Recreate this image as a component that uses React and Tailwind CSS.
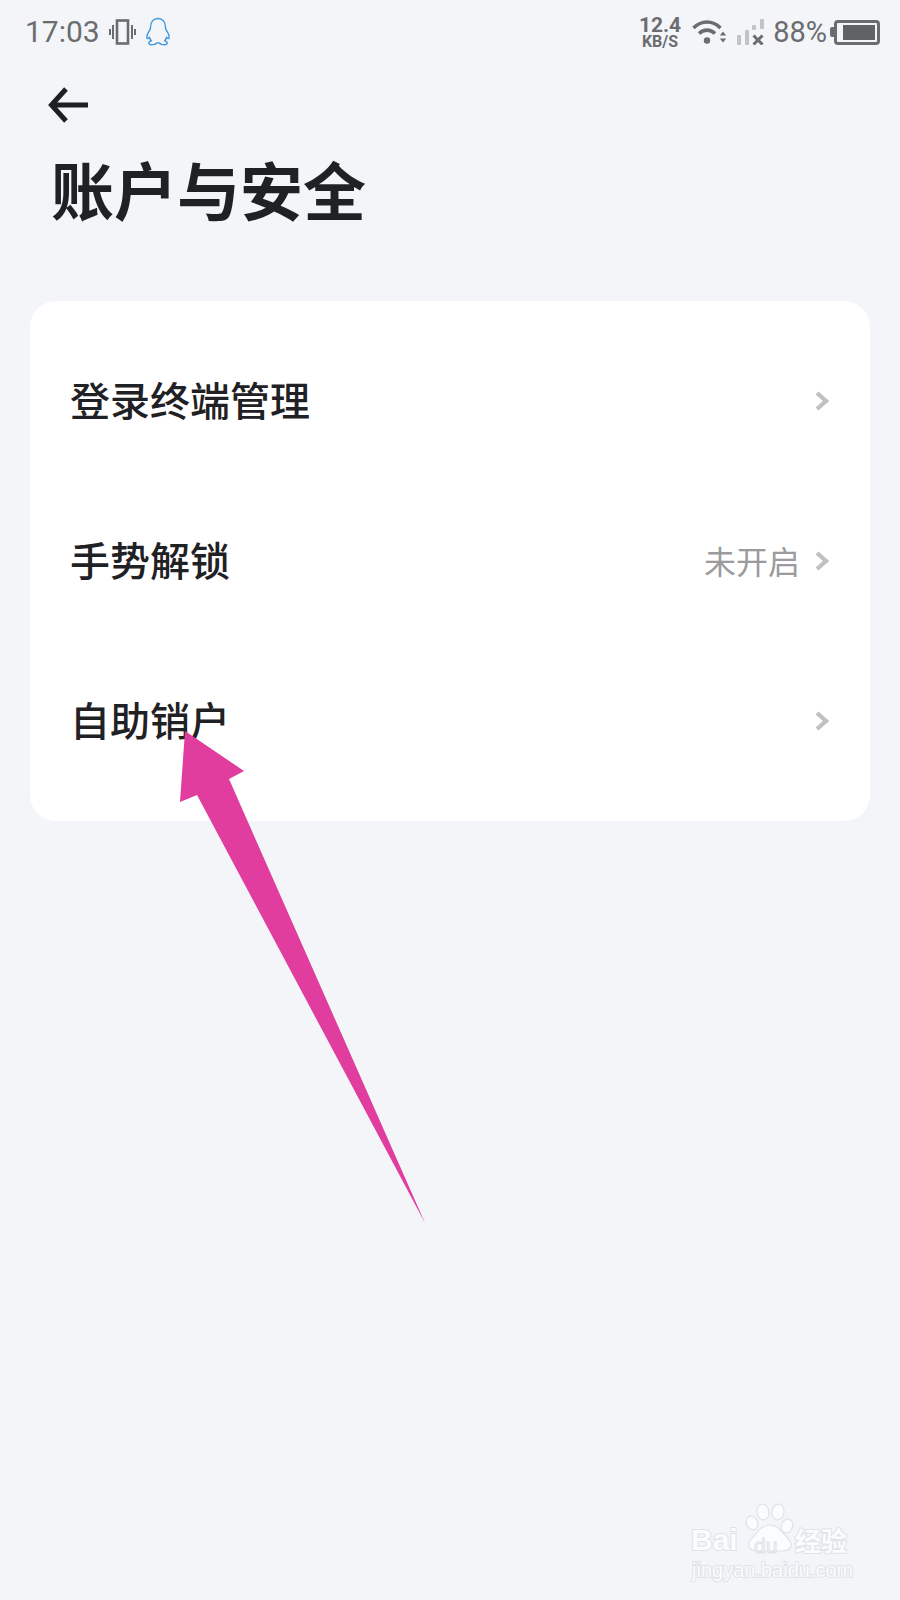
const cjk = "font-['Noto_Sans_CJK_SC','Noto_Sans',sans-serif]";

const rows = [
  { label: '登录终端管理' },
  { label: '手势解锁', value: '未开启' },
  { label: '自助销户' },
];

const VibrateIcon = () => (
  <svg width="27" height="26" viewBox="0 0 27 26" fill="none" stroke="#6a6c70">
    <rect x="8" y="1.5" width="11" height="23" strokeWidth="2.600" />
    <path d="M4 6v14M1 10v6M23 6v14M26 10v6" strokeWidth="2" />
  </svg>
);

const QQIcon = () => (
  <svg width="26" height="30" viewBox="0 0 26 30" fill="none" stroke="#3d97db" strokeWidth="1.400" strokeLinejoin="round">
    <path d="M13 1.500c-4.800 0-7.400 3.600-7.400 8.300 0 1.400-.2 2.400-1 3.600-1.700 2.500-3.100 5.300-2.600 7.600.3 1.100 1.200.8 2.400-.8.400 1.500 1 2.600 2 3.500-1.500.6-2.800 1.500-2.600 2.700.3 1.300 3.200 1.400 5.300 1 1.400-.3 2.200-1 2.900-1.500h2c.7.500 1.500 1.200 2.900 1.500 2.100.4 5 .3 5.300-1 .2-1.200-1.100-2.100-2.600-2.700 1-.9 1.600-2 2-3.500 1.200 1.600 2.100 1.900 2.400.8.500-2.300-.9-5.100-2.600-7.600-.8-1.200-1-2.200-1-3.600 0-4.700-2.600-8.300-7.400-8.300z" />
  </svg>
);

const WifiIcon = () => (
  <svg width="35" height="26" viewBox="0 0 35 26" fill="none">
    <path d="M1.500 9C9.500 1 20.500 1 28.500 9" stroke="#6a6c70" strokeWidth="3.600" />
    <path d="M7 14.500c4.800-4.500 11.200-4.500 16 0" stroke="#6a6c70" strokeWidth="3.600" />
    <circle cx="15" cy="21.500" r="3.200" fill="#6a6c70" />
    <path d="M31 12.500l3.200 4h-6.400zM31 23.500l3.200-4h-6.400z" fill="#6a6c70" />
  </svg>
);

const SignalIcon = () => (
  <svg width="28" height="26" viewBox="0 0 28 26">
    <rect x="0" y="16" width="4" height="10" rx="1" fill="#c2c3c6" />
    <rect x="8" y="11" width="4" height="15" rx="1" fill="#c2c3c6" />
    <rect x="15" y="6" width="4" height="5" rx="1" fill="#c2c3c6" />
    <rect x="23" y="0" width="4" height="10" rx="1" fill="#c2c3c6" />
    <path d="M16.500 16.500l9 9M25.500 16.500l-9 9" stroke="#6a6c70" strokeWidth="3" />
  </svg>
);

const BatteryIcon = () => (
  <div className="flex items-center">
    <div className="w-[4px] h-[10px] bg-[#6a6c70] rounded-l-[2px]" />
    <div className="w-[46px] h-[25px] border-[3px] border-[#6a6c70] rounded-[4px] flex justify-end items-center pr-[2px]">
      <div className="w-[32px] h-[15px] bg-[#606266]" />
    </div>
  </div>
);

const ListChevron = () => (
  <svg width="14" height="20" viewBox="0 0 14 20" fill="none" stroke="#c0c0c3" strokeWidth="4.200">
    <path d="M2 2l9 8-9 8" />
  </svg>
);

// the pink annotation arrow drawn over the list
const PinkArrow = () => (
  <svg className="absolute left-0 top-0 pointer-events-none" width="900" height="1600" viewBox="0 0 900 1600">
    <polygon points="185,731 244,771 229,779 425,1223 197,795 180,802" fill="#e03d9f" />
  </svg>
);

const markText = "text-[#fbfcfd] [-webkit-text-stroke:2px_#e0e2e7] [paint-order:stroke_fill]";

const Watermark = () => (
  <div className="absolute left-[690px] top-[1500px] w-[170px] h-[80px] select-none">
    <svg className="absolute left-[55px] top-[3px]" width="50" height="50" viewBox="0 0 50 50" fill="#fbfcfd" stroke="#e0e2e7" strokeWidth="1.200">
      <ellipse cx="7" cy="20" rx="5.500" ry="7" transform="rotate(-20 7 20)" />
      <ellipse cx="18" cy="9" rx="6" ry="8" transform="rotate(-8 18 9)" />
      <ellipse cx="33" cy="9" rx="6" ry="8" transform="rotate(10 33 9)" />
      <ellipse cx="42" cy="23" rx="5.500" ry="7" transform="rotate(20 42 23)" />
      <path d="M25 22c-7 0-11 5-15 10-4 4-7 7-6 11 1 4 5 5 9 5h24c4 0 8-1 9-5 1-4-3-8-7-12-4-4-7-9-14-9z" />
    </svg>
    <div className={`absolute left-[1px] top-[22px] font-['Liberation_Sans',sans-serif] font-bold text-[30px] leading-[36px] ${markText}`}>Bai</div>
    <div className="absolute left-[64px] top-[35px] font-['Liberation_Sans',sans-serif] text-[21px] leading-[22px] text-[#f3f5f9] [-webkit-text-stroke:1px_#e0e2e7]">du</div>
    <div className={`absolute left-[105px] top-[22px] ${cjk} font-bold text-[26px] leading-[36px] ${markText}`}>经验</div>
    <div className={`absolute left-[2px] top-[58px] font-['Liberation_Sans',sans-serif] text-[20px] leading-[24px] whitespace-nowrap ${markText}`}>jingyan.baidu.com</div>
  </div>
);

export default function App() {
  return (
    <div className={`relative w-[900px] h-[1600px] overflow-hidden bg-[#f3f5f9] ${cjk}`}>
      {/* Status bar */}
      <div className="h-[64px] pl-[25px] pr-[20px] flex items-center justify-between">
        <div className="flex items-center gap-[9px]">
          <span className="font-['Roboto',sans-serif] text-[30px] leading-none text-[#6a6c70]">17:03</span>
          <VibrateIcon />
          <QQIcon />
        </div>
        <div className="flex items-center">
          <div className="flex flex-col items-center font-['Roboto',sans-serif] font-bold text-[#6a6c70] mr-[11px]">
            <span className="text-[21px] leading-[18px]">12.4</span>
            <span className="text-[16px] leading-[15px]">KB/S</span>
          </div>
          <WifiIcon />
          <div className="ml-[10px] mr-[8px]"><SignalIcon /></div>
          <span className="font-['Roboto',sans-serif] text-[29px] leading-none text-[#6a6c70] mr-[3px]">88%</span>
          <BatteryIcon />
        </div>
      </div>

      {/* Header */}
      <div className="pl-[48px] pt-[22px] h-[42px]">
        <svg width="40" height="38" viewBox="0 0 40 38" fill="none" stroke="#1e2024" strokeWidth="5">
          <path d="M40 19H5M18 3L3.500 19 18 35" />
        </svg>
      </div>
      <h1 className="pl-[51px] mt-[40px] text-[63px] leading-[84px] font-semibold text-[#1f2124]">账户与安全</h1>

      {/* List card */}
      <div className="mx-[30px] mt-[71px] py-[20px] bg-white rounded-[26px]">
        {rows.map((row) => (
          <div key={row.label} className="h-[160px] pl-[40px] pr-[41px] flex items-center justify-between">
            <span className="pb-[4px] text-[40px] leading-none font-medium text-[#1f2124]">{row.label}</span>
            <div className="flex items-center gap-[15px]">
              {row.value && <span className="pb-[2px] text-[32px] leading-none text-[#9b9b9e]">{row.value}</span>}
              <ListChevron />
            </div>
          </div>
        ))}
      </div>

      <PinkArrow />
      <Watermark />
    </div>
  );
}
